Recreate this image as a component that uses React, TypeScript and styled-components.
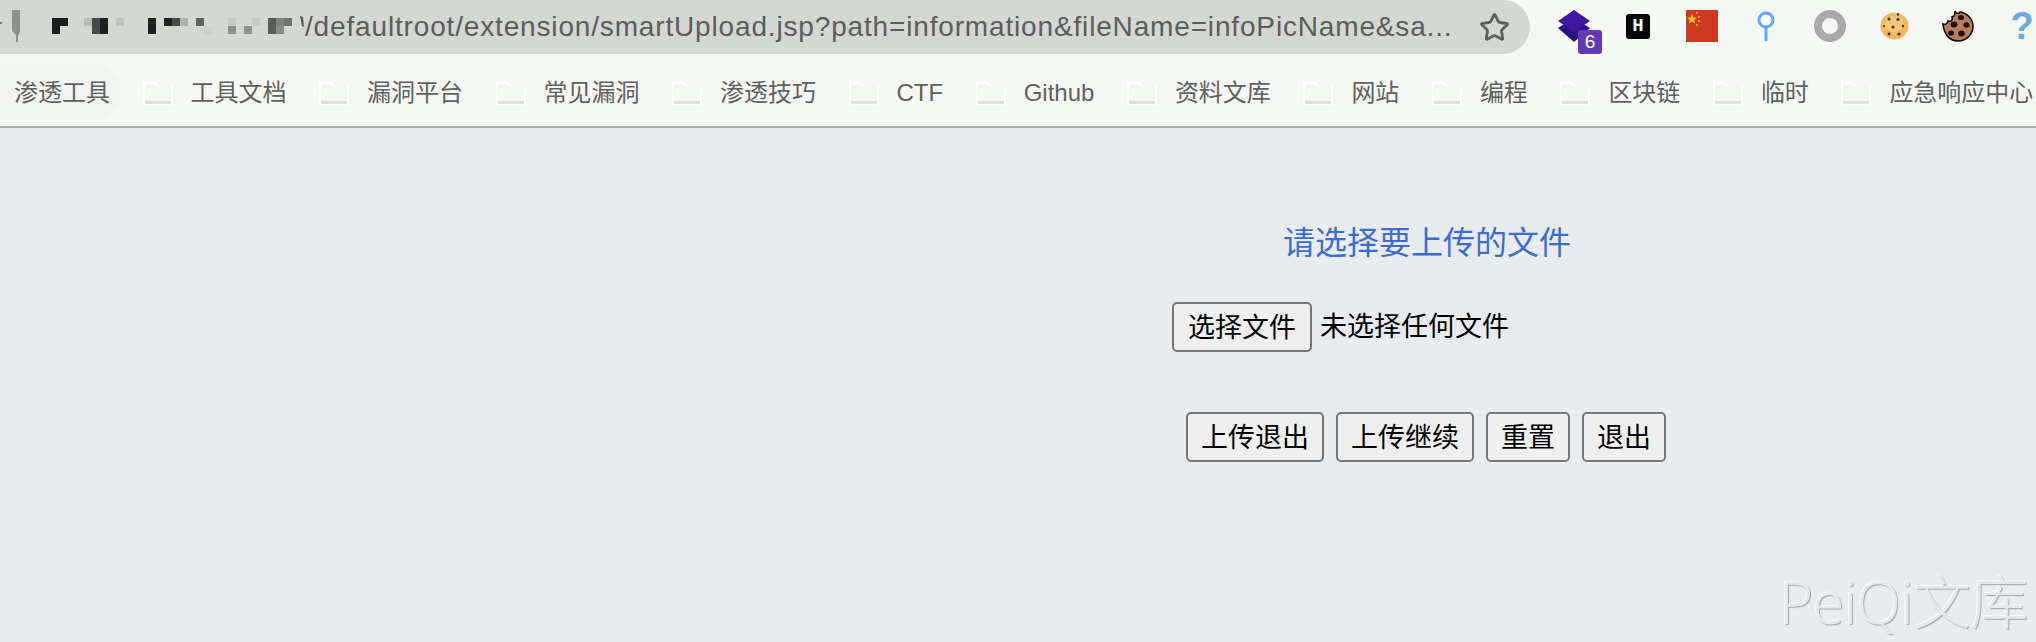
import React from 'react'
import styled, { createGlobalStyle } from 'styled-components'
import { Star } from 'lucide-react'

const GlobalStyle = createGlobalStyle`
  html, body {
    margin: 0;
    padding: 0;
    height: 642px;
    overflow: hidden;
    background: #e8ecee;
    font-family: "Liberation Sans", "Noto Sans CJK SC", sans-serif;
  }
`

const Page = styled.div`
  position: relative;
  width: 2036px;
  height: 642px;
  overflow: hidden;
  display: flex;
  flex-direction: column;
`
const Toolbar = styled.div`
  display: flex;
  height: 54px;
  flex: none;
  background: #f6f8f5;
`
const Omnibox = styled.div`
  display: flex;
  align-items: center;
  width: 1530px;
  height: 54px;
  flex: none;
  background: #d5d7d3;
  border-radius: 0 27px 27px 0;
`
const Mosaic = styled.svg`
  flex: none;
  align-self: flex-start;
  overflow: visible;
`
const UrlText = styled.span`
  flex: 1;
  font-size: 28px;
  letter-spacing: 0.84px;
  line-height: 54px;
  color: #5b5d5c;
  white-space: nowrap;
`
const StarButton = styled.span`
  display: flex;
  flex: none;
  margin-right: 20px;
  color: #5e605e;
`
const Extensions = styled.div`
  display: flex;
  padding-left: 12px;
`
const ExtensionSlot = styled.div`
  position: relative;
  width: 64px;
  height: 54px;
  display: flex;
  align-items: center;
  justify-content: center;
  padding-bottom: 2px;
  box-sizing: border-box;
`
const CountBadge = styled.span`
  position: absolute;
  left: 36px;
  top: 30px;
  width: 24px;
  height: 24px;
  border-radius: 3px;
  background: #6139b0;
  color: #fff;
  font-size: 19px;
  line-height: 24px;
  text-align: center;
`
const HBadge = styled.span`
  width: 24px;
  height: 25px;
  border-radius: 3px;
  background: #050505;
  color: #f4f4f4;
  font-family: "Liberation Mono", monospace;
  font-weight: bold;
  font-size: 19px;
  line-height: 25px;
  text-align: center;
`
const HelpMark = styled.span`
  font-size: 38px;
  line-height: 40px;
  font-weight: bold;
  color: #6fa9dc;
`
const BookmarkBar = styled.div`
  display: flex;
  align-items: center;
  gap: 32.5px;
  height: 74px;
  flex: none;
  box-sizing: border-box;
  padding: 6px 0 0 14px;
  background: #f6f8f5;
  border-bottom: 2px solid #acaeac;
  white-space: nowrap;
`
const Bookmark = styled.div<{ $active?: boolean }>`
  position: relative;
  display: flex;
  align-items: center;
  gap: 18px;
  flex: none;
  font-size: 24px;
  line-height: 30px;
  color: #5f615c;
  ${p => p.$active && `
    &::before {
      content: '';
      position: absolute;
      left: -24px;
      right: -10px;
      top: -14px;
      bottom: -12px;
      border-radius: 0 24px 24px 0;
      background: #f2f4f1;
    }
  `}
`
const BookmarkLabel = styled.span`
  position: relative;
`
const Content = styled.main`
  flex: 1;
  padding: 95px 0 0 1172px;
`
const UploadForm = styled.form`
  display: flex;
  flex-direction: column;
  width: 510px;
`
const Title = styled.h2`
  margin: 0 0 39px;
  font-size: 32px;
  line-height: 40px;
  font-weight: normal;
  text-align: center;
  color: #3f6cc8;
`
const FileRow = styled.div`
  display: flex;
  align-items: center;
  gap: 8px;
  height: 50px;
  font-size: 27px;
  color: #000;
`
const NoFileLabel = styled.span`
  padding-bottom: 5px;
`
const FormButton = styled.button<{ $wide?: boolean }>`
  height: 50px;
  box-sizing: border-box;
  padding: 0 ${p => (p.$wide ? 14 : 13)}px 3px;
  border: 2px solid #767676;
  border-radius: 5px;
  background: #efefef;
  color: #000;
  font-family: inherit;
  font-size: 27px;
`
const ActionRow = styled.div`
  display: flex;
  gap: 12px;
  margin-top: 60px;
  padding-left: 14px;
`
const Watermark = styled.div`
  position: absolute;
  right: 8px;
  bottom: 5px;
  font-family: "Open Sans", "Noto Sans CJK SC", sans-serif;
  font-weight: 300;
  font-size: 58px;
  line-height: 70px;
  letter-spacing: -0.5px;
  color: #e6e8e9;
  text-shadow: 1px 1px 1px #a4a6a7, -1px -1px 0 #fafafa;
`

const bookmarks = ['工具文档', '漏洞平台', '常见漏洞', '渗透技巧', 'CTF', 'Github', '资料文库', '网站', '编程', '区块链', '临时', '应急响应中心']

// blurred-out host name: [x, y, w, h, colour]
const mosaicCells: [number, number, number, number, string][] = [
  [52, 18, 16, 8, '#1c1e20'], [52, 26, 8, 8, '#1c1e20'],
  [84, 18, 8, 8, '#b8bab6'], [92, 18, 8, 16, '#46484a'], [100, 18, 8, 16, '#1f2123'], [116, 18, 8, 8, '#bfc1bd'],
  [148, 18, 8, 16, '#1f2123'], [164, 18, 8, 8, '#1f2123'], [172, 18, 8, 8, '#46484a'], [180, 18, 8, 8, '#b0b2ae'],
  [196, 18, 8, 8, '#5f615f'], [204, 26, 8, 8, '#cfd1cc'],
  [228, 18, 8, 8, '#c4c6c2'], [228, 26, 8, 8, '#8f918e'], [244, 26, 8, 8, '#8f918e'], [252, 18, 8, 8, '#c8cac6'],
  [268, 18, 8, 16, '#5b5d5d'], [276, 18, 16, 8, '#7f817f'], [276, 26, 8, 8, '#8a8c8a'], [284, 18, 8, 8, '#6f716f'],
]

const FolderIcon = () => (
  <svg width="30" height="23" viewBox="0 0 30 23">
    <path d="M1 1h11l3 4h14v17H1z" fill="#f6f8f5" stroke="#fff" strokeWidth="2" />
    <path d="M2 5h26" stroke="#eceeeb" strokeWidth="1" />
    <path d="M2 20.5h26" stroke="#dfe0de" strokeWidth="3" />
  </svg>
)

export default function App() {
  return (
    <Page>
      <GlobalStyle />
      <Toolbar>
        <Omnibox>
          <Mosaic width="305" height="54" viewBox="0 0 305 54">
            <path d="M60 54h236l-3 3H100l-16-1z" fill="#d5d7d3" />
            <path d="M12 10h8v22l-2 4v6h-2v-7l-4-4z" fill="#8f918d" />
            <rect x="0" y="22" width="2" height="2" fill="#777" />
            {mosaicCells.map(([x, y, w, h, c]) => (
              <rect key={`${x}-${y}`} x={x} y={y} width={w} height={h} fill={c} />
            ))}
            <path d="M300 16l3 1 1 10-2-1z" fill="#5b5d5c" />
          </Mosaic>
          <UrlText>/defaultroot/extension/smartUpload.jsp?path=information&amp;fileName=infoPicName&amp;sa...</UrlText>
          <StarButton><Star size={31} strokeWidth={2.2} /></StarButton>
        </Omnibox>
        <Extensions>
          <ExtensionSlot>
            <svg width="32" height="32" viewBox="0 0 32 32">
              <path d="M0 18L16 8l16 10-16 14z" fill="#2c1480" />
              <path d="M16 0l16 11-16 11L0 11z" fill="#3f17a3" />
            </svg>
            <CountBadge>6</CountBadge>
          </ExtensionSlot>
          <ExtensionSlot><HBadge>H</HBadge></ExtensionSlot>
          <ExtensionSlot>
            <svg width="32" height="32" viewBox="0 0 32 32">
              <rect width="32" height="32" fill="#cb3a20" />
              <path d="M6 4l1.4 3.4 3.6.2-2.8 2.3 1 3.5L6 11.4l-3.2 2 1-3.5L1 7.6l3.6-.2z" fill="#f7c52c" />
              <circle cx="11" cy="3" r="1" fill="#f0b32c" />
              <circle cx="13" cy="7" r="1" fill="#f0b32c" />
              <circle cx="13" cy="11" r="1" fill="#f0b32c" />
              <circle cx="11" cy="15" r="1" fill="#f0b32c" />
            </svg>
          </ExtensionSlot>
          <ExtensionSlot>
            <svg width="18" height="30" viewBox="0 0 18 30">
              <circle cx="9" cy="9" r="7" fill="none" stroke="#66a6f8" strokeWidth="3" />
              <path d="M9 16v13" stroke="#66a6f8" strokeWidth="3" strokeLinecap="round" />
            </svg>
          </ExtensionSlot>
          <ExtensionSlot>
            <svg width="32" height="32" viewBox="0 0 32 32">
              <circle cx="16" cy="16" r="12" fill="none" stroke="#a9a9a9" strokeWidth="8" />
            </svg>
          </ExtensionSlot>
          <ExtensionSlot>
            <svg width="29" height="28" viewBox="0 0 29 28">
              <ellipse cx="14.5" cy="14" rx="14" ry="13.5" fill="#eeb865" />
              <ellipse cx="14" cy="12" rx="9" ry="8" fill="#f3c77a" />
              <g fill="#4f3420">
                <circle cx="9" cy="7" r="1.6" /><circle cx="18" cy="7.5" r="1.6" /><circle cx="18" cy="2.5" r="1.2" />
                <circle cx="13" cy="15" r="1.6" /><circle cx="4" cy="14" r="1" /><circle cx="23" cy="14" r="1.2" />
                <circle cx="9" cy="22" r="1.4" /><circle cx="19" cy="22" r="1.6" />
              </g>
            </svg>
          </ExtensionSlot>
          <ExtensionSlot>
            <svg width="32" height="32" viewBox="0 0 32 32">
              <path d="M13 1c1 3 4 3 5 1 7 1 13 7 13 14 0 8-6 15-15 15C8 31 2 25 1 14c3 1 5-1 5-3 3 1 5-1 4-4 2 0 3-3 3-6z" fill="#b67e5c" stroke="#0c0806" strokeWidth="1.6" />
              <g fill="#1d120d">
                <ellipse cx="19" cy="7.5" rx="3" ry="2.6" />
                <ellipse cx="12" cy="14.5" rx="3.4" ry="3" />
                <ellipse cx="24.5" cy="15" rx="3" ry="2.8" />
                <ellipse cx="9" cy="23" rx="3" ry="2.6" />
                <ellipse cx="19.5" cy="23.5" rx="3.2" ry="3" />
              </g>
            </svg>
          </ExtensionSlot>
          <ExtensionSlot><HelpMark>?</HelpMark></ExtensionSlot>
        </Extensions>
      </Toolbar>
      <BookmarkBar>
        <Bookmark $active><BookmarkLabel>渗透工具</BookmarkLabel></Bookmark>
        {bookmarks.map(name => (
          <Bookmark key={name}>
            <FolderIcon />
            <BookmarkLabel>{name}</BookmarkLabel>
          </Bookmark>
        ))}
      </BookmarkBar>
      <Content>
        <UploadForm>
          <Title>请选择要上传的文件</Title>
          <FileRow>
            <FormButton type="button" $wide>选择文件</FormButton>
            <NoFileLabel>未选择任何文件</NoFileLabel>
          </FileRow>
          <ActionRow>
            <FormButton type="button">上传退出</FormButton>
            <FormButton type="button">上传继续</FormButton>
            <FormButton type="button">重置</FormButton>
            <FormButton type="button">退出</FormButton>
          </ActionRow>
        </UploadForm>
      </Content>
      <Watermark>PeiQi文库</Watermark>
    </Page>
  )
}
